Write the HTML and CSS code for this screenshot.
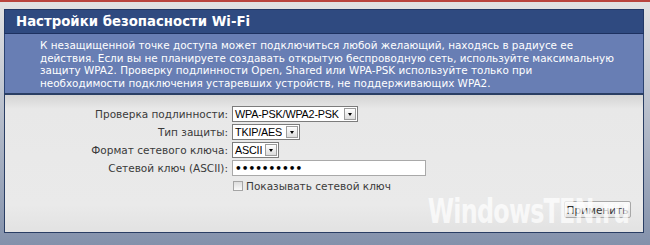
FILE: index.html
```html
<!DOCTYPE html>
<html lang="ru">
<head>
    <meta charset="UTF-8">
    <meta name="viewport" content="width=device-width, initial-scale=1.0">
    <title>Настройки безопасности Wi-Fi</title>
    <link rel="stylesheet" href="styles.css">
</head>
<body>
    <div class="panel">
        <h1 class="panel-title">Настройки безопасности Wi-Fi</h1>
        <p class="panel-desc">
            К незащищенной точке доступа может подключиться любой желающий, находясь в радиусе ее<br>
            действия. Если вы не планируете создавать открытую беспроводную сеть, используйте максимальную<br>
            защиту WPA2. Проверку подлинности Open, Shared или WPA-PSK используйте только при<br>
            необходимости подключения устаревших устройств, не поддерживающих WPA2.
        </p>
        <form class="panel-form" onsubmit="return false">
            <div class="fields">
                <label>Проверка подлинности:</label>
                <div class="select select-auth"><span class="value">WPA-PSK/WPA2-PSK</span><span class="arrow"></span></div>

                <label>Тип защиты:</label>
                <div class="select select-type"><span class="value">TKIP/AES</span><span class="arrow"></span></div>

                <label>Формат сетевого ключа:</label>
                <div class="select select-format"><span class="value">ASCII</span><span class="arrow"></span></div>

                <label for="key">Сетевой ключ (ASCII):</label>
                <div><input type="password" id="key" class="key-input" value="1234567890"></div>

                <span></span>
                <label class="check"><span class="box"></span>Показывать сетевой ключ</label>
            </div>
            <div class="actions">
                <button type="button" class="btn">Применить</button>
            </div>
            <div class="watermark">WindowsTEN.ru</div>
        </form>
    </div>
</body>
</html>
```

FILE: styles.css
```css
html {
    background: #8a97ae;
}
body {
    margin: 0;
    height: 243px;
    overflow: hidden;
    border-top: 2px solid #b9443d;
    background: linear-gradient(#e2e2e2 0, #c4c9d3 80px, #8391ab 243px);
    font-family: "DejaVu Sans", Verdana, sans-serif;
}
.panel {
    margin: 7px 6px 0 4px;
}
.panel-title {
    margin: 0;
    height: 23px;
    line-height: 23px;
    padding-left: 11px;
    background: #2f4a80;
    border: 1px solid #213866;
    border-bottom-color: #1d3160;
    color: #fff;
    font-size: 13.3px;
    font-weight: bold;
}
.panel-desc {
    margin: 0;
    padding: 5px 0 4px 35px;
    background: #687eb4;
    border-left: 1px solid #2a4272;
    border-right: 1px solid #2a4272;
    color: #fff;
    font-size: 10.4px;
    line-height: 12.6px;
    white-space: nowrap;
}
.panel-form {
    position: relative;
    margin: 0;
    padding: 11px 12px 14px 0;
    border: 1px solid #2a3e64;
    border-top-width: 2px;
    background: linear-gradient(#d4d4d4 0, #e8e8e8 14px, #eaeaea 80%, #e2e2e2 100%);
}
.fields {
    display: grid;
    grid-template-columns: 223px auto;
    grid-auto-rows: 16px;
    column-gap: 4px;
    row-gap: 2px;
    font-size: 10.5px;
    color: #3a3a3a;
}
.fields label {
    text-align: right;
    line-height: 16px;
    white-space: nowrap;
}
.select {
    box-sizing: border-box;
    display: flex;
    align-items: center;
    justify-content: space-between;
    height: 16px;
    background: #fff;
    border: 1px solid #7c7c7c;
}
.select-auth { width: 126px; }
.select-type { width: 68px; }
.select-format { width: 47px; }
.select .value {
    padding-left: 2px;
    overflow: hidden;
    white-space: nowrap;
    font-family: "Liberation Sans", Arial, sans-serif;
    font-size: 10.8px;
    letter-spacing: -0.2px;
    color: #000;
}
.select .arrow {
    position: relative;
    flex-shrink: 0;
    box-sizing: border-box;
    width: 12px;
    height: 12px;
    margin-right: 1px;
    border: 1px solid #9c9c9c;
    background: linear-gradient(#ffffff, #dcdcdc);
}
.select .arrow::before {
    content: "";
    position: absolute;
    left: 2.5px;
    top: 4px;
    border-left: 2.5px solid transparent;
    border-right: 2.5px solid transparent;
    border-top: 3px solid #000;
}
.key-input {
    box-sizing: border-box;
    display: block;
    width: 194px;
    height: 16px;
    margin: 0;
    padding: 0 2px;
    border: 1px solid #a9a9a9;
    background: #fff;
    font-family: "DejaVu Sans", sans-serif;
    font-size: 10.5px;
    font-weight: bold;
    letter-spacing: 0;
    color: #000;
    outline: none;
}
.fields .check {
    display: flex;
    align-items: center;
    text-align: left;
    color: #3a3a3a;
}
.check .box {
    box-sizing: border-box;
    width: 10px;
    height: 10px;
    margin: 0 3px 0 1px;
    border: 1px solid #a5a5a5;
    background: linear-gradient(#dedede, #fafafa);
}
.actions {
    display: flex;
    justify-content: flex-end;
    margin-top: 7px;
}
.btn {
    box-sizing: border-box;
    width: 67px;
    height: 17px;
    padding: 0;
    border: 1px solid #a8a8a8;
    border-radius: 2px;
    background: linear-gradient(#fbfbfb, #e3e3e3);
    font-family: "DejaVu Sans", Verdana, sans-serif;
    font-size: 10.5px;
    color: #333;
}
.watermark {
    position: absolute;
    right: 14px;
    bottom: 4px;
    font-family: "DejaVu Sans Condensed", "Liberation Sans Narrow", sans-serif;
    font-weight: bold;
    font-size: 34px;
    line-height: 34px;
    letter-spacing: -1px;
    color: rgba(255, 255, 255, 0.72);
    pointer-events: none;
    transform: scaleX(0.78);
    transform-origin: right bottom;
}
```
